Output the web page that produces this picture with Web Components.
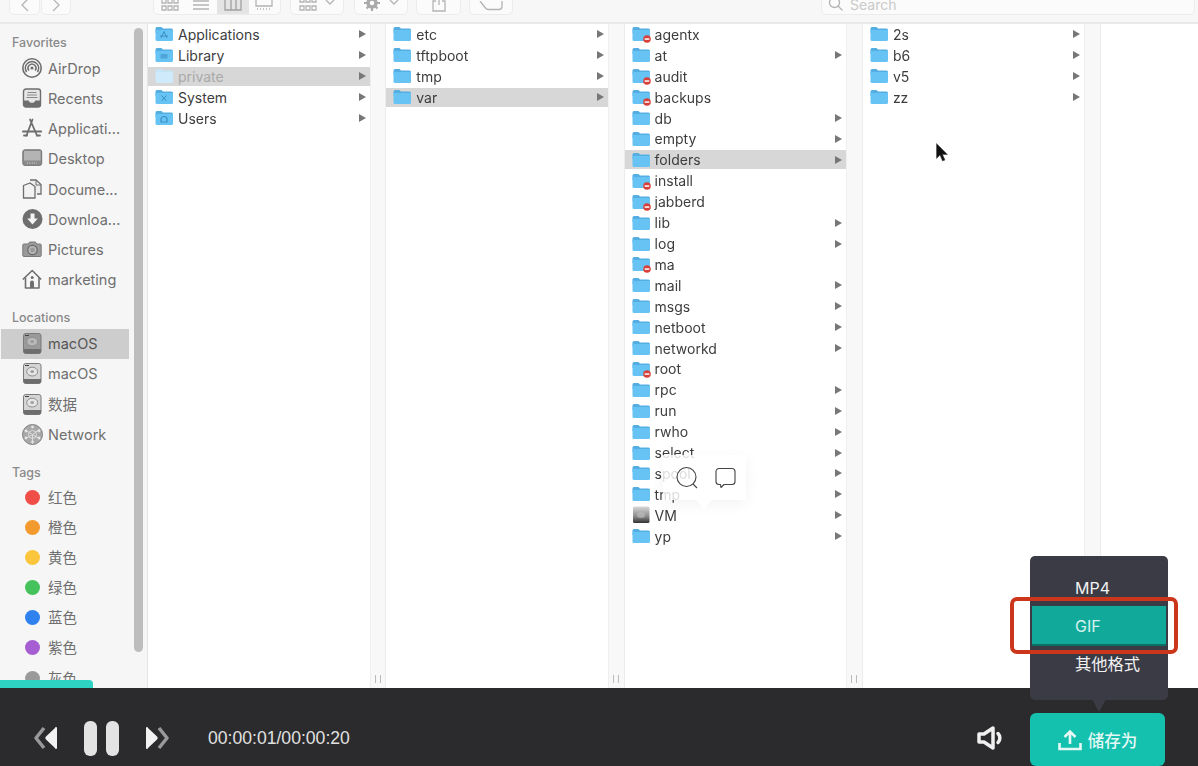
<!DOCTYPE html>
<html lang="zh">
<head>
<meta charset="utf-8">
<title>Finder</title>
<style>
  html, body { margin: 0; height: 100%; overflow: hidden; background: #fff; }
  body { font-family: Inter, "Noto Sans CJK SC", sans-serif; }
</style>
</head>
<body>
<video-editor>
  <finder-toolbar slot="top"></finder-toolbar>

  <finder-sidebar slot="side">
    <side-label first>Favorites</side-label>
    <side-item icon="airdrop">AirDrop</side-item>
    <side-item icon="recents">Recents</side-item>
    <side-item icon="apps">Applicati...</side-item>
    <side-item icon="desktop">Desktop</side-item>
    <side-item icon="docs">Docume...</side-item>
    <side-item icon="download">Downloa...</side-item>
    <side-item icon="camera">Pictures</side-item>
    <side-item icon="home">marketing</side-item>
    <side-label gap>Locations</side-label>
    <side-item icon="drive" active>macOS</side-item>
    <side-item icon="drive">macOS</side-item>
    <side-item icon="drive" cjk>数据</side-item>
    <side-item icon="globe">Network</side-item>
    <side-label gap tags>Tags</side-label>
    <side-item cjk dot="#ef4f47">红色</side-item>
    <side-item cjk dot="#f39a2f">橙色</side-item>
    <side-item cjk dot="#fbc63c">黄色</side-item>
    <side-item cjk dot="#45c25c">绿色</side-item>
    <side-item cjk dot="#2f81ee">蓝色</side-item>
    <side-item cjk dot="#a55fd2">紫色</side-item>
    <side-item cjk dot="#9a9a9a">灰色</side-item>
  </finder-sidebar>

  <finder-column slot="cols">
    <file-row glyph="apps" arrow>Applications</file-row>
    <file-row glyph="lib" arrow>Library</file-row>
    <file-row kind="dim" arrow selected>private</file-row>
    <file-row glyph="sys" arrow>System</file-row>
    <file-row glyph="users" arrow>Users</file-row>
  </finder-column>
  <finder-column slot="cols">
    <file-row arrow>etc</file-row>
    <file-row arrow>tftpboot</file-row>
    <file-row arrow>tmp</file-row>
    <file-row arrow selected>var</file-row>
  </finder-column>
  <finder-column slot="cols">
    <file-row kind="locked">agentx</file-row>
    <file-row arrow>at</file-row>
    <file-row kind="locked">audit</file-row>
    <file-row kind="locked">backups</file-row>
    <file-row arrow>db</file-row>
    <file-row arrow>empty</file-row>
    <file-row arrow selected>folders</file-row>
    <file-row kind="locked">install</file-row>
    <file-row kind="locked">jabberd</file-row>
    <file-row arrow>lib</file-row>
    <file-row arrow>log</file-row>
    <file-row kind="locked">ma</file-row>
    <file-row arrow>mail</file-row>
    <file-row arrow>msgs</file-row>
    <file-row arrow>netboot</file-row>
    <file-row arrow>networkd</file-row>
    <file-row kind="locked">root</file-row>
    <file-row arrow>rpc</file-row>
    <file-row arrow>run</file-row>
    <file-row arrow>rwho</file-row>
    <file-row arrow>select</file-row>
    <file-row arrow>spool</file-row>
    <file-row arrow>tmp</file-row>
    <file-row kind="disk" arrow>VM</file-row>
    <file-row arrow>yp</file-row>
  </finder-column>
  <finder-column slot="cols">
    <file-row arrow>2s</file-row>
    <file-row arrow>b6</file-row>
    <file-row arrow>v5</file-row>
    <file-row arrow>zz</file-row>
  </finder-column>

  <player-bar slot="bottom"></player-bar>
  <save-menu slot="over"></save-menu>
  <mini-tip slot="over"></mini-tip>
  <mouse-arrow slot="over"></mouse-arrow>
</video-editor>

<script>
// icons for the sidebar, all on a 20x20 box
var side_icons = {
  airdrop: `<g fill="none" stroke="#6e6e6e" stroke-width="1.600"><circle cx="10" cy="10" r="9.200"/><path d="M4.600 14a6.600 6.600 0 1 1 10.800 0"/><path d="M7 12.600a3.900 3.900 0 1 1 6 0"/></g><circle cx="10" cy="10" r="1.600" fill="#6e6e6e"/>`,
  recents: `<rect x="1.500" y="1" width="17" height="18" rx="2.500" fill="#e6e6e6" stroke="#6e6e6e" stroke-width="1.400"/><path d="M1.500 12.500h5.200c.4 1.600 1.600 2.300 3.300 2.300s2.900-.7 3.300-2.300h5.200V17a2 2 0 0 1-2 2h-13a2 2 0 0 1-2-2z" fill="#6e6e6e"/><path d="M5.500 4.500h9M5 7h10M4.500 9.500h11" stroke="#888" stroke-width="1.100"/>`,
  apps: `<g fill="none" stroke="#6e6e6e" stroke-width="1.800" stroke-linecap="round"><path d="M10.500 1.500 4.500 17.500M8 1.500l7 16"/><path d="M.8 13.500h18.400"/><path d="M2 17.500h3M15 17.500h3"/></g>`,
  desktop: `<rect x=".8" y="1.800" width="18.900" height="15.600" rx="2" fill="#8a8a8a" stroke="#777"/><rect x="2" y="3" width="16.500" height="9.500" fill="#b4b4b4"/><path d="M5 15h10" stroke="#ddd" stroke-width="1.200" stroke-dasharray="1 1.400"/>`,
  docs: `<path d="M8 1h6l5 4.500V15h-4" fill="#eee" stroke="#6e6e6e" stroke-width="1.300"/><path d="M1.500 6.500 8 4l5 3.500V19H1.500z" fill="#f2f2f2" stroke="#6e6e6e" stroke-width="1.300"/><path d="M14 1v5h5" fill="none" stroke="#6e6e6e"/>`,
  download: `<circle cx="10.500" cy="10" r="10" fill="#6e6e6e"/><path d="M8.500 4.500h4v5h3.300l-5.300 6-5.300-6h3.300z" fill="#f4f4f4"/>`,
  camera: `<path d="M1.800 5h4.500l1.200-2h6l1.200 2h3.500a1 1 0 0 1 1 1v10.500a1 1 0 0 1-1 1H1.800a1 1 0 0 1-1-1V6a1 1 0 0 1 1-1z" fill="#999" stroke="#7a7a7a"/><circle cx="10.500" cy="11" r="4.700" fill="#bbb" stroke="#666" stroke-width="1.200"/><circle cx="10.500" cy="11" r="2.400" fill="#999"/>`,
  home: `<g fill="none" stroke="#6e6e6e" stroke-width="1.600" stroke-linejoin="round"><path d="M.8 10.500 10.200 1.500l9 9"/><path d="M3.500 8.500V19h13.500V8.500"/></g><path d="M8 19v-5.500a2 2 0 0 1 4 0V19z" fill="#6e6e6e"/><circle cx="10.200" cy="8.500" r="1.500" fill="#6e6e6e"/>`,
  drive: `<rect x="1.500" y=".5" width="17.500" height="20" rx="2.200" fill="var(--disk,#d4d4d4)" stroke="#7a7a7a"/><path d="M1.500 16h17.500v2.500a2 2 0 0 1-2 2H3.500a2 2 0 0 1-2-2z" fill="#6e6e6e"/><ellipse cx="10.200" cy="8.600" rx="5.500" ry="4.400" fill="var(--disc,#e4e4e4)" stroke="#8e8e8e"/><ellipse cx="10.200" cy="8.600" rx="1.800" ry="1.400" fill="#999"/><path d="M3 2.500h4" stroke="#444"/>`,
  globe: `<circle cx="10.500" cy="10.500" r="10" fill="#a8a8a8" stroke="#808080"/><g stroke="#ddd" fill="none"><path d="M3 6l7.500 4.500L18 5M10.500 10.500v9M3 15l7.500-4.500L18 15"/><circle cx="10.500" cy="10.500" r="4"/></g><g fill="#e4e4e4"><circle cx="10.500" cy="3" r="1.400"/><circle cx="4" cy="7" r="1.400"/><circle cx="17" cy="7" r="1.400"/><circle cx="4" cy="14" r="1.400"/><circle cx="17" cy="14" r="1.400"/><circle cx="10.500" cy="18" r="1.400"/></g>`
};

// little marks on the special folders
var folder_glyphs = {
  apps: `<path d="M9 6.500l-3 6.500M9 6.500l3 6.500M5 11h8" stroke="#3a8fc4" fill="none"/>`,
  lib: `<path d="M5.500 8h7v4.500h-7z" fill="#4ea4d6"/>`,
  sys: `<path d="M6.500 7.500l5 5.500M11.500 7.500l-5 5.500" stroke="#3a8fc4" fill="none"/>`,
  users: `<path d="M6 13v-2.500a3 3 0 0 1 6 0V13z" fill="none" stroke="#3a8fc4" stroke-width="1.200"/>`
};

function folderSvg(kind, glyph){
  var back = kind == "dim" ? "#c6e6f8" : "#55aee2";
  var front = kind == "dim" ? "#cfeafa" : "#68c3f5";
  var badge = kind == "locked"
    ? `<circle cx="15" cy="14" r="3.800" fill="#d8403a"/><rect x="12.700" y="13.300" width="4.600" height="1.500" fill="#fff"/>` : "";
  return `<svg width="19" height="18" viewBox="0 0 19 18" style="overflow:visible">
    <path d="M.5 3.500a1.500 1.500 0 0 1 1.500-1.500h4.500l1.500 1.500h8.500a1.500 1.500 0 0 1 1.500 1.500v3h-17.500z" fill="${back}"/>
    <path d="M.5 5h17.500v9.500a1.500 1.500 0 0 1-1.500 1.500H2a1.500 1.500 0 0 1-1.500-1.500z" fill="${front}"/>
    ${folder_glyphs[glyph] || ""}${badge}</svg>`;
}

var disk_svg = `<svg width="19" height="18" viewBox="0 0 19 18">
  <defs><linearGradient id="d" x1="0" y1="0" x2="0" y2="1"><stop offset="0" stop-color="#d8d8d8"/><stop offset=".6" stop-color="#8c8c8c"/><stop offset="1" stop-color="#333"/></linearGradient></defs>
  <rect x="1" y=".5" width="16.500" height="16.500" rx="1.500" fill="url(#d)"/><ellipse cx="9" cy="9" rx="4" ry="3" fill="#bbb" opacity=".7"/></svg>`;

// whole window, the places are slots
var template_editor = document.createElement("template");
template_editor.innerHTML = `
<style>
  :host { display: flex; flex-direction: column; position: relative; width: 1198px; height: 766px; overflow: hidden; background: #fff; }
  .finder { filter: blur(.45px); flex: 1; min-height: 0; display: flex; flex-direction: column; }
  .main { flex: 1; min-height: 0; display: flex; }
  .cols { flex: 1; display: flex; }
  .progress { position: absolute; left: 0; top: 680px; width: 93px; height: 8px; background: #2fd3c4; border-radius: 0 4px 0 0; }
</style>
<div class="finder">
  <slot name="top"></slot>
  <div class="main">
    <slot name="side"></slot>
    <div class="cols"><slot name="cols"></slot></div>
  </div>
</div>
<div class="progress"></div>
<slot name="bottom"></slot>
<slot name="over"></slot>
`;
class VideoEditor extends HTMLElement {
  constructor(){
    super();
    this.attachShadow({mode:"open"}).appendChild(template_editor.content.cloneNode(true));
  }
}
customElements.define("video-editor", VideoEditor);

// top bar, only the lower part of the buttons is in the picture
var template_toolbar = document.createElement("template");
template_toolbar.innerHTML = `
<style>
  :host { display: flex; align-items: flex-end; height: 24px; flex: none; box-sizing: border-box; padding: 0 3px 7px 9px; background: #f7f7f7; border-bottom: 2px solid #e9e9e9; overflow: hidden; }
  .b { height: 24px; flex: none; box-sizing: border-box; background: #fbfbfb; border: 1px solid #ececec; border-radius: 5px; display: flex; align-items: flex-end; justify-content: center; padding-bottom: 2px; }
  svg { display: block; fill: none; stroke: #b4b4b4; stroke-width: 1.300; }
  .seg { padding: 0; align-items: stretch; }
  .seg div { flex: 1; display: flex; align-items: flex-end; justify-content: center; padding-bottom: 2px; }
  .seg .on { background: #e4e4e4; }
  .search { flex: 1; margin-left: 308px; justify-content: flex-start; padding-left: 6px; color: #c9c9c9; font-size: 14px; line-height: 16px; gap: 6px; padding-bottom: 1px; }
</style>
<div class="b" style="width:31px"><svg width="10" height="13" viewBox="0 0 10 13"><path d="M8 0 2 6l6 6"/></svg></div>
<div class="b" style="width:30px;margin-left:1px"><svg width="10" height="13" viewBox="0 0 10 13"><path d="M2 0l6 6-6 6"/></svg></div>
<div class="b seg" style="width:128px;margin-left:82px">
  <div><svg width="18" height="12" viewBox="0 0 18 12"><path d="M1 0v3h4V0M7 0v3h4V0M13 0v3h4V0M1 6h4v4H1zM7 6h4v4H7zM13 6h4v4h-4z"/></svg></div>
  <div><svg width="18" height="12" viewBox="0 0 18 12"><path d="M1 1h16M1 5h16M1 9h16"/></svg></div>
  <div class="on"><svg width="18" height="12" viewBox="0 0 18 12" style="stroke:#a0a0a0"><path d="M1 0v10h16V0M7 0v10M12 0v10"/></svg></div>
  <div><svg width="18" height="12" viewBox="0 0 18 12"><path d="M1 0v6h16V0M2 9h1M5 9h1M8 9h1M11 9h1M14 9h1"/></svg></div>
</div>
<div class="b" style="width:54px;margin-left:9px;gap:8px"><svg width="18" height="14" viewBox="0 0 18 14"><path d="M1 1v3h4V1M7 1v3h4V1M13 1v3h4V1M1 8h4v4H1zM7 8h4v4H7zM13 8h4v4h-4z"/></svg><svg width="10" height="10" viewBox="0 0 10 10" style="margin-bottom:4px"><path d="M1 2l4 4 4-4"/></svg></div>
<div class="b" style="width:54px;margin-left:10px;gap:8px"><svg width="18" height="14" viewBox="0 0 18 14"><circle cx="9" cy="5" r="4" stroke-width="3.500" stroke="#aaa"/><path d="M9 -3v3M9 10v3M1 5h3M14 5h3M3.500 -.5 5.500 1.500M12.500 8.500l2 2M14.500 -.5l-2 2M5.500 8.500l-2 2" stroke="#aaa" stroke-width="2.200"/></svg><svg width="10" height="10" viewBox="0 0 10 10" style="margin-bottom:4px"><path d="M1 2l4 4 4-4"/></svg></div>
<div class="b" style="width:45px;margin-left:8px"><svg width="14" height="13" viewBox="0 0 14 13"><path d="M7 6V0M4 2h-3v10h12V2h-3"/></svg></div>
<div class="b" style="width:44px;margin-left:8px"><svg width="24" height="11" viewBox="0 0 24 11"><path d="M1 0l5.500 7c.8 1 1.500 1.500 3 1.500H20a3 3 0 0 0 3-3V0"/></svg></div>
<div class="b search"><svg width="16" height="16" viewBox="0 0 16 16" style="margin-bottom:1px"><circle cx="6.500" cy="6.500" r="5"/><path d="M10 10l4.500 4.500"/></svg><span>Search</span></div>
`;
class FinderToolbar extends HTMLElement {
  constructor(){
    super();
    this.attachShadow({mode:"open"}).appendChild(template_toolbar.content.cloneNode(true));
  }
}
customElements.define("finder-toolbar", FinderToolbar);

// sidebar
var template_sidebar = document.createElement("template");
template_sidebar.innerHTML = `
<style>
  :host { display: block; position: relative; flex: none; width: 148px; box-sizing: border-box; padding: 9.500px 0 0 1px; background: #f6f6f6; border-right: 1px solid #e4e4e4; overflow: hidden; }
  .thumb { position: absolute; left: 134px; top: 4px; width: 9px; height: 624px; background: #bdbdbd; border-radius: 5px; }
</style>
<slot></slot>
<div class="thumb"></div>
`;
class FinderSidebar extends HTMLElement {
  constructor(){
    super();
    this.attachShadow({mode:"open"}).appendChild(template_sidebar.content.cloneNode(true));
  }
}
customElements.define("finder-sidebar", FinderSidebar);

class SideLabel extends HTMLElement {
  constructor(){
    super();
    this.attachShadow({mode:"open"}).innerHTML = `
    <style>
      :host { display: block; height: 18px; line-height: 18px; padding-left: 11px; margin-bottom: 2px; font-size: 12.500px; font-weight: 500; color: #8a8a8a; }
      :host([first]) { margin-bottom: 1.700px; }
      :host([gap]) { margin-top: 14px; }
      :host([tags]) { margin-top: 14.500px; margin-bottom: 0; }
    </style>
    <slot></slot>`;
  }
}
customElements.define("side-label", SideLabel);

class SideItem extends HTMLElement {
  constructor(){
    super();
    this.attachShadow({mode:"open"}).innerHTML = `
    <style>
      :host { display: flex; align-items: center; height: 30.200px; width: 128px; box-sizing: border-box; padding-left: 21px; font-size: 14.500px; color: #6f6f6f; white-space: nowrap; --disk: #d4d4d4; --disc: #e4e4e4; }
      :host([active]) { background: #cdcdcd; color: #555; --disk: #9a9a9a; --disc: #b8b8b8; }
      :host([cjk]) .t { position: relative; top: -1px; }
      .ic { width: 21px; height: 21px; flex: none; margin-right: 5px; display: flex; align-items: center; justify-content: center; }
      .dot { width: 15px; height: 15px; border-radius: 50%; margin-right: 1px; }
    </style>
    <span class="ic"></span><span class="t"><slot></slot></span>`;
  }
  connectedCallback(){
    var ic = this.shadowRoot.querySelector(".ic");
    if (this.hasAttribute("dot")) {
      ic.innerHTML = `<div class="dot" style="background:${this.getAttribute("dot")}"></div>`;
    } else {
      ic.innerHTML = `<svg width="21" height="21" viewBox="0 0 21 21">${side_icons[this.getAttribute("icon")]}</svg>`;
    }
  }
}
customElements.define("side-item", SideItem);

// one column of the column view + its gutter with the drag handle
var template_column = document.createElement("template");
template_column.innerHTML = `
<style>
  :host { display: flex; flex: none; width: 238.300px; }
  .list { width: 221.500px; flex: none; box-sizing: border-box; background: #fff; }
  .gutter { flex: 1; display: flex; align-items: flex-end; justify-content: center; padding-bottom: 5px; box-sizing: border-box; background: #f8f8f8; border-left: 1px solid #efefef; border-right: 1px solid #ececec; }
  .grip { width: 6px; height: 8px; box-sizing: border-box; border-left: 1px solid #bbb; border-right: 1px solid #bbb; }
</style>
<div class="list"><slot></slot></div>
<div class="gutter"><div class="grip"></div></div>
`;
class FinderColumn extends HTMLElement {
  constructor(){
    super();
    this.attachShadow({mode:"open"}).appendChild(template_column.content.cloneNode(true));
  }
}
customElements.define("finder-column", FinderColumn);

class FileRow extends HTMLElement {
  constructor(){
    super();
    this.attachShadow({mode:"open"}).innerHTML = `
    <style>
      :host { display: block; height: 20.920px; padding: 1px 0; box-sizing: border-box; font-size: 14px; color: #3d3d3d; }
      .r { display: flex; align-items: center; height: 100%; padding: 0 3px 0 7px; }
      :host([selected]) .r { background: #d7d7d7; }
      :host([kind="dim"]) { color: #a9a9a9; }
      .ic { width: 19px; height: 18px; margin-right: 4px; flex: none; display: flex; align-items: center; }
      .name { flex: 1; white-space: nowrap; }
      .arrow { width: 0; height: 0; border-left: 7px solid #777; border-top: 4px solid transparent; border-bottom: 4px solid transparent; flex: none; margin-right: 1px; }
    </style>
    <div class="r"><span class="ic"></span><span class="name"><slot></slot></span><span class="arrow"></span></div>`;
  }
  connectedCallback(){
    var kind = this.getAttribute("kind");
    this.shadowRoot.querySelector(".ic").innerHTML = kind == "disk" ? disk_svg : folderSvg(kind, this.getAttribute("glyph"));
    if (!this.hasAttribute("arrow")) this.shadowRoot.querySelector(".arrow").style.visibility = "hidden";
  }
}
customElements.define("file-row", FileRow);

// player controls at the bottom
var template_player = document.createElement("template");
template_player.innerHTML = `
<style>
  :host { display: flex; align-items: center; flex: none; height: 78px; box-sizing: border-box; padding: 22px 0 0 34px; background: #2b2b2d; position: relative; }
  svg { display: block; flex: none; }
  .pause { display: flex; gap: 9px; margin: 0 26px 0 26px; }
  .pause i { display: block; width: 13px; height: 35px; border-radius: 6px; background: #e3e3e3; }
  .time { margin-left: 39px; font: 17.600px "Liberation Sans", sans-serif; color: #e0e0e0; }
  .sound { margin-left: auto; margin-right: 26px; }
  .save { align-self: flex-end; width: 135px; height: 53px; margin-right: 33px; box-sizing: border-box; background: #14c0ae; border-radius: 6px; display: flex; align-items: center; justify-content: center; gap: 6px; color: #e6f8f5; font: 500 16.500px "Noto Sans CJK SC", sans-serif; }
</style>
<svg width="24" height="24" viewBox="0 0 24 24"><path d="M10 2 2 12l8 10" fill="none" stroke="#999" stroke-width="3.500" stroke-linejoin="round"/><path d="M23 2v20a1 1 0 0 1-2 0L12 13.500a2 2 0 0 1 0-3L21 2a1 1 0 0 1 2 0z" fill="#f2f2f2"/></svg>
<div class="pause"><i></i><i></i></div>
<svg width="24" height="24" viewBox="0 0 24 24"><path d="M14 2l8 10-8 10" fill="none" stroke="#999" stroke-width="3.500" stroke-linejoin="round"/><path d="M1 2v20a1 1 0 0 0 2 0l9-8.500a2 2 0 0 0 0-3L3 2a1 1 0 0 0-2 0z" fill="#f2f2f2"/></svg>
<div class="time">00:00:01/00:00:20</div>
<svg class="sound" width="27" height="24" viewBox="0 0 27 24" fill="none" stroke="#f0f0f0" stroke-width="3.500" stroke-linejoin="round"><path d="M2 8h5l9-6v20l-9-6H2z"/><path d="M21 7.500c2.500 2.500 2.500 6.500 0 9" stroke-linecap="round"/></svg>
<div class="save">
  <svg width="24" height="22" viewBox="0 0 24 22" fill="none" stroke="#e6f8f5" stroke-width="2.600"><path d="M12 15V3M6.500 8 12 2.500 17.500 8"/><path d="M1.500 14v6h21v-6"/></svg>
  <span>储存为</span>
</div>
`;
class PlayerBar extends HTMLElement {
  constructor(){
    super();
    this.attachShadow({mode:"open"}).appendChild(template_player.content.cloneNode(true));
  }
}
customElements.define("player-bar", PlayerBar);

// popup above the save button, plus the red mark somebody drew on it
var template_menu = document.createElement("template");
template_menu.innerHTML = `
<style>
  :host { display: block; position: absolute; left: 1030px; top: 556px; width: 138px; height: 144px; box-sizing: border-box; padding-top: 12px; background: #3b3b45; border-radius: 5px; font: 400 16px Inter, "Noto Sans CJK SC", sans-serif; color: #f2f2f2; }
  :host::after { content: ""; position: absolute; left: 62px; top: 143px; border-left: 7px solid transparent; border-right: 7px solid transparent; border-top: 13px solid #3b3b45; }
  .i { height: 38px; line-height: 38px; padding-left: 45px; }
  .first { line-height: 40px; }
  .on { margin: 0 2px; padding-left: 43px; line-height: 40px; background: #10a99a; color: #d5f3ee; box-shadow: 0 2px 0 #0b6f68; }
  .last { font-size: 16.300px; line-height: 40px; }
  .mark { position: absolute; left: -20px; top: 41px; width: 168px; height: 57px; box-sizing: border-box; border: 4px solid #cc371b; border-radius: 7px; }
</style>
<div class="i first">MP4</div>
<div class="i on">GIF</div>
<div class="i last">其他格式</div>
<div class="mark"></div>
`;
class SaveMenu extends HTMLElement {
  constructor(){
    super();
    this.attachShadow({mode:"open"}).appendChild(template_menu.content.cloneNode(true));
  }
}
customElements.define("save-menu", SaveMenu);

// floating search / comment bubble over the list
var template_tip = document.createElement("template");
template_tip.innerHTML = `
<style>
  :host { display: flex; align-items: center; gap: 17px; position: absolute; left: 663px; top: 455px; width: 83px; height: 45px; box-sizing: border-box; padding-left: 13px; background: rgba(255,255,255,.82); box-shadow: 0 4px 14px rgba(0,0,0,.05); }
  :host::after { content: ""; position: absolute; left: 33px; top: 45px; border-left: 8px solid transparent; border-right: 8px solid transparent; border-top: 9px solid rgba(255,255,255,.9); }
  svg { display: block; flex: none; fill: none; stroke: #444; stroke-width: 1.100; }
</style>
<svg width="22" height="23" viewBox="0 0 22 23"><circle cx="10.500" cy="11" r="9.500"/><path d="M17 18l4 4"/></svg>
<svg width="21" height="22" viewBox="0 0 21 22"><path d="M4 1.500h13a3 3 0 0 1 3 3v10a3 3 0 0 1-3 3H9l-3 3-.5-3H4a3 3 0 0 1-3-3v-10a3 3 0 0 1 3-3z" stroke-linejoin="round"/></svg>
`;
class MiniTip extends HTMLElement {
  constructor(){
    super();
    this.attachShadow({mode:"open"}).appendChild(template_tip.content.cloneNode(true));
  }
}
customElements.define("mini-tip", MiniTip);

class MouseArrow extends HTMLElement {
  constructor(){
    super();
    this.attachShadow({mode:"open"}).innerHTML = `
    <style>:host { display: block; position: absolute; left: 936px; top: 143px; width: 12px; height: 20px; }</style>
    <svg width="12" height="20" viewBox="0 0 12 20" style="display:block"><path d="M.5.500v15l3.500-3.500 2.500 6 2.500-1-2.500-5.500h5z" fill="#111" stroke="#444" stroke-width=".5"/></svg>`;
  }
}
customElements.define("mouse-arrow", MouseArrow);
</script>
</body>
</html>
